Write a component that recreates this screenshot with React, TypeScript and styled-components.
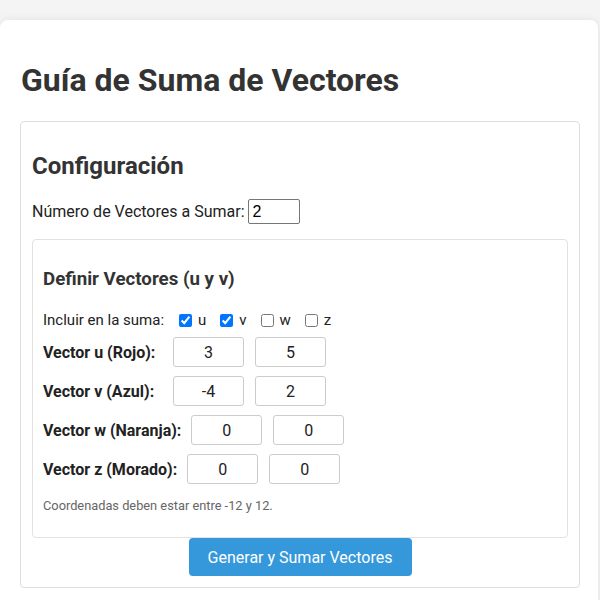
import React from "react";
import styled, { createGlobalStyle } from "styled-components";

const Global = createGlobalStyle`
  html, body { margin: 0; padding: 0; background: #f4f4f4; }
  body { font-family: Roboto, "Liberation Sans", Arial, sans-serif; color: #333; }
  * { box-sizing: border-box; }
`;

const Page = styled.div`
  padding-top: 20px;
`;

const Card = styled.div`
  background: #fff;
  border-radius: 8px;
  box-shadow: 0 0 8px rgba(0, 0, 0, 0.08);
  padding: 20px;
  width: 598px;
  min-height: 600px;
`;

const Title = styled.h1`
  font-size: 32px;
  font-weight: 700;
  color: #333;
  margin: 21px 0 22px 1px;
`;

const Section = styled.div`
  border: 1px solid #ddd;
  border-radius: 4px;
  padding: 11px;
  width: 560px;
`;

const SectionTitle = styled.h2`
  font-size: 24px;
  font-weight: 700;
  color: #333;
  margin: 19px 0 19px;
`;

const CountRow = styled.div`
  display: flex;
  align-items: center;
  height: 25px;
  font-size: 16px;
  color: #222;
`;

const CountInput = styled.input`
  width: 52px;
  height: 25px;
  margin-left: 3px;
  font-family: "Liberation Sans", Arial, sans-serif;
  font-size: 16px;
  padding: 1px 4px;
  border: 1px solid #767676;
  border-radius: 2px;
  color: #000;
`;

const Box = styled.div`
  border: 1px solid #e2e2e2;
  border-radius: 4px;
  padding: 10px;
  margin-top: 15px;
`;

const BoxTitle = styled.h3`
  font-size: 18.72px;
  font-weight: 700;
  color: #333;
  margin: 18px 0 18px;
`;

const IncludeRow = styled.div`
  display: flex;
  align-items: center;
  height: 24px;
  font-size: 15px;
  color: #222;
  margin-bottom: 5px;
`;

const IncludeLabel = styled.span`
  margin-right: 11px;
`;

const Check = styled.label`
  display: inline-flex;
  align-items: center;
  margin-right: 10px;
  input { margin: 0 6px 0 4px; width: 13px; height: 13px; }
`;

const VectorRow = styled.div`
  display: flex;
  align-items: center;
  margin-bottom: 9px;
`;

const VectorLabel = styled.span`
  min-width: 120px;
  font-size: 16px;
  font-weight: 700;
  color: #222;
  margin-right: 10px;
`;

const CoordInput = styled.input`
  width: 71px;
  height: 30px;
  border: 1px solid #ccc;
  border-radius: 3px;
  text-align: center;
  font-family: Roboto, sans-serif;
  font-size: 16px;
  color: #222;
  margin-right: 11px;
`;

const Note = styled.p`
  font-size: 12.8px;
  color: #666;
  margin: 14px 0 14px;
`;

const Button = styled.button`
  display: block;
  margin: 0 auto;
  width: 223px;
  height: 38px;
  background: #3498db;
  color: #fff;
  border: none;
  border-radius: 4px;
  font-family: Roboto, sans-serif;
  font-size: 16px;
`;

const vectors = [
  { name: "Vector u (Rojo):", x: "3", y: "5" },
  { name: "Vector v (Azul):", x: "-4", y: "2" },
  { name: "Vector w (Naranja):", x: "0", y: "0" },
  { name: "Vector z (Morado):", x: "0", y: "0" },
];

const checks = [
  { id: "u", on: true },
  { id: "v", on: true },
  { id: "w", on: false },
  { id: "z", on: false },
];

export default function App() {
  return (
    <Page>
      <Global />
      <Card>
        <Title>Guía de Suma de Vectores</Title>
        <Section>
          <SectionTitle>Configuración</SectionTitle>
          <CountRow>
            Número de Vectores a Sumar:
            <CountInput type="text" defaultValue="2" />
          </CountRow>
          <Box>
            <BoxTitle>Definir Vectores (u y v)</BoxTitle>
            <IncludeRow>
              <IncludeLabel>Incluir en la suma:</IncludeLabel>
              {checks.map((c) => (
                <Check key={c.id}>
                  <input type="checkbox" defaultChecked={c.on} />
                  {c.id}
                </Check>
              ))}
            </IncludeRow>
            {vectors.map((v) => (
              <VectorRow key={v.name}>
                <VectorLabel>{v.name}</VectorLabel>
                <CoordInput defaultValue={v.x} />
                <CoordInput defaultValue={v.y} />
              </VectorRow>
            ))}
            <Note>Coordenadas deben estar entre -12 y 12.</Note>
          </Box>
          <Button>Generar y Sumar Vectores</Button>
        </Section>
      </Card>
    </Page>
  );
}
